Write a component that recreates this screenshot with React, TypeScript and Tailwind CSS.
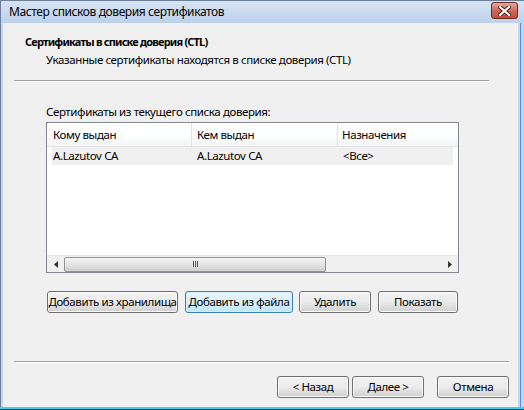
import React from 'react';

const font = { fontFamily: '"Noto Sans", "Open Sans", sans-serif' };

const Btn: React.FC<{ label: string; w: string; focused?: boolean }> = ({ label, w, focused }) => (
  <button
    className={
      focused
        ? `${w} h-[22px] rounded-[3px] border border-[#3c7fb1] bg-gradient-to-b from-[#eaf6fd] via-[#d9f0fc] to-[#bee6fd] text-[11.5px] tracking-[-0.4px] whitespace-nowrap text-black shadow-[inset_0_0_0_1px_#d6eefb] flex items-center justify-center`
        : `${w} h-[22px] rounded-[3px] border border-[#707070] bg-gradient-to-b from-[#f2f2f2] via-[#ebebeb] to-[#cfcfcf] text-[11.5px] tracking-[-0.4px] whitespace-nowrap text-black shadow-[inset_0_0_0_1px_#fcfcfc] flex items-center justify-center`
    }
  >
    {label}
  </button>
);

export default function App() {
  return (
    <div className="w-[524px] h-[410px] bg-[#c4d7ee] flex flex-col overflow-hidden text-black tracking-[-0.4px]" style={font}>
      {/* title bar */}
      <div className="h-[23px] flex items-center justify-between pl-2 pr-[6px] bg-gradient-to-b from-[#d6e4f3] to-[#bcd1ea] border-t border-l border-[#6c7f99]">
        <span className="text-[12px] leading-none tracking-[-0.4px]">Мастер списков доверия сертификатов</span>
        <div className="w-[27px] h-[17px] -mt-[3px] rounded-[3px] border border-[#6b2a24] bg-gradient-to-b from-[#e4a79c] via-[#cf6a5c] to-[#c44a3b] flex items-center justify-center">
          <svg width="13" height="10" viewBox="0 0 13 10">
            <path d="M2 1 L11 9 M11 1 L2 9" stroke="#4a1a15" strokeWidth="4" strokeLinecap="square" />
            <path d="M2 1 L11 9 M11 1 L2 9" stroke="#ffffff" strokeWidth="2.2" strokeLinecap="square" />
          </svg>
        </div>
      </div>

      {/* client */}
      <div className="flex-1 flex border-l border-[#6c7f99]">
        <div className="w-[2px] bg-[#c4d7ee]" />
        <div className="flex-1 flex flex-col bg-[#f0f0f0] pt-[11px] text-[11.5px]">
          <div className="pl-[22px] text-[11px] font-bold leading-[16px] tracking-[-0.8px]">Сертификаты в списке доверия (CTL)</div>
          <div className="pl-[43px] mt-[2px] leading-[16px]">Указанные сертификаты находятся в списке доверия (CTL)</div>

          <div className="ml-[11px] w-[475px] mt-[12px] border-t border-[#a0a0a0] border-b border-b-white" />

          <div className="pl-[43px] mt-[22px] leading-[16px]">Сертификаты из текущего списка доверия:</div>

          {/* list view */}
          <div className="ml-[43px] mt-[2px] w-[413px] h-[151px] border border-[#828790] bg-white flex flex-col">
            <div className="h-[24px] flex bg-gradient-to-b from-white via-white to-[#f3f4f6] border-b border-[#e3e4e6]">
              <div className="w-[145px] pl-[6px] flex items-center border-r border-[#e3e4e6]">Кому выдан</div>
              <div className="w-[146px] pl-[5px] flex items-center border-r border-[#e3e4e6]">Кем выдан</div>
              <div className="flex-1 pl-[4px] flex items-center">Назначения</div>
            </div>
            <div className="h-[18px] mx-[5px] flex bg-[#f0f0f0] items-center">
              <div className="w-[140px] pl-[1px]">A.Lazutov CA</div>
              <div className="w-[146px] pl-[5px]">A.Lazutov CA</div>
              <div className="flex-1 pl-[5px]">&lt;Все&gt;</div>
            </div>
            <div className="flex-1" />
            {/* horizontal scrollbar */}
            <div className="h-[17px] flex items-center bg-[#f0f0f0] border-t border-[#e8e8e8]">
              <div className="w-[17px] h-full flex items-center justify-center">
                <svg width="4" height="7" viewBox="0 0 4 7"><path d="M4 0 L0 3.5 L4 7 Z" fill="#333" /></svg>
              </div>
              <div className="flex-1 h-full flex items-center">
                <div className="w-[262px] h-[15px] rounded-[2px] border border-[#959595] bg-gradient-to-b from-[#f4f4f4] via-[#e4e4e4] to-[#cfcfcf] flex items-center justify-center">
                  <div className="w-[1px] h-[6px] bg-[#555]" />
                  <div className="w-[1px] h-[6px] bg-[#555] ml-[1px]" />
                  <div className="w-[1px] h-[6px] bg-[#555] ml-[1px]" />
                </div>
              </div>
              <div className="w-[17px] h-full flex items-center justify-center">
                <svg width="4" height="7" viewBox="0 0 4 7"><path d="M0 0 L4 3.5 L0 7 Z" fill="#333" /></svg>
              </div>
            </div>
          </div>

          <div className="ml-[44px] mt-[18px] flex">
            <Btn label="Добавить из хранилища" w="w-[131px]" />
            <div className="ml-[7px]"><Btn label="Добавить из файла" w="w-[108px]" focused /></div>
            <div className="ml-[6px]"><Btn label="Удалить" w="w-[72px]" /></div>
            <div className="ml-[7px]"><Btn label="Показать" w="w-[80px]" /></div>
          </div>

          <div className="flex-1" />
          <div className="ml-[11px] w-[495px] border-t border-[#a0a0a0] border-b border-b-white" />
          <div className="mt-[13px] flex pl-[274px]">
            <Btn label="< Назад" w="w-[72px]" />
            <div className="ml-[3px]"><Btn label="Далее >" w="w-[72px]" /></div>
            <div className="ml-[13px]"><Btn label="Отмена" w="w-[72px]" /></div>
          </div>
          <div className="h-[9px]" />
        </div>
        <div className="w-[2px] bg-[#c4d7ee]" />
        <div className="w-[1px] bg-[#4d8fd6]" />
        <div className="w-[3px] bg-[#c4d7ee]" />
      </div>
      <div className="h-[2px] bg-[#3fd0f0]" />
      <div className="h-[1px] bg-[#23384f]" />
    </div>
  );
}
